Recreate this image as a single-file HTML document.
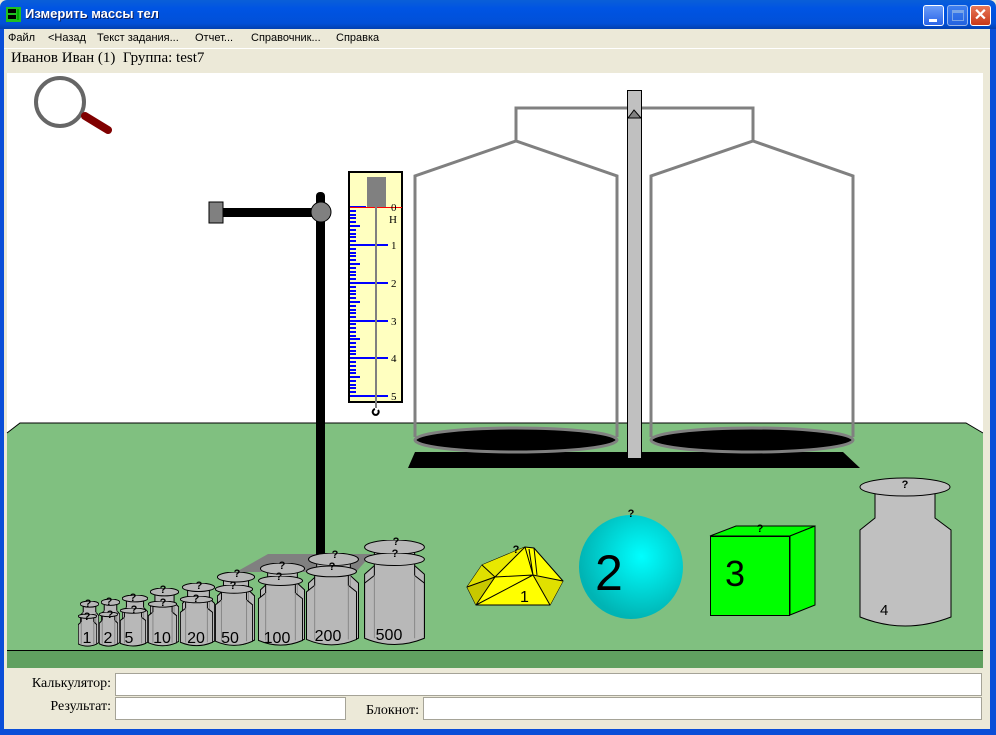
<!DOCTYPE html>
<html><head><meta charset="utf-8">
<style>
*{margin:0;padding:0;box-sizing:border-box}
body{width:996px;height:735px;overflow:hidden;background:#ece9d8;position:relative;font-family:"Liberation Sans",sans-serif}
.title{position:absolute;left:0;top:0;width:996px;height:29px;background:linear-gradient(#0a5fd8,#0054e3 30%,#0150d8 80%,#0340b0);border-radius:7px 7px 0 0}
.title span{position:absolute;left:25px;top:6px;color:#fff;font-weight:bold;font-size:13px;text-shadow:1px 1px #0a1e60}
.bl{position:absolute;top:29px;bottom:0;width:4px;background:#0a4ed8}
.menu{position:absolute;left:4px;top:29px;width:986px;height:19px;font-size:11px;color:#000}
.menu span{position:absolute;top:3px}
.user{position:absolute;left:11px;top:50px;font-family:"Liberation Serif",serif;font-size:15px}
.lbl{position:absolute;font-family:"Liberation Serif",serif;font-size:14px}
.inp{position:absolute;background:#fff;border:1px solid #a5a397;border-top-color:#a5a397}
.btn{position:absolute;top:5px;width:21px;height:21px;border:1px solid #fff;border-radius:3px}
</style></head><body>
<div class="title">
<svg style="position:absolute;left:6px;top:7px" width="15" height="15"><rect width="15" height="15" fill="#20c020"/><rect x="2" y="2" width="8" height="4" fill="#000"/><rect x="2" y="8" width="8" height="4" fill="#000"/><rect x="11" y="2" width="2" height="11" fill="#0a0"/></svg>
<span>Измерить массы тел</span>
<div class="btn" style="left:923px;background:linear-gradient(#6a9cf8,#2a64e8)"><div style="position:absolute;left:5px;top:13px;width:8px;height:3px;background:#fff"></div></div>
<div class="btn" style="left:947px;background:linear-gradient(#6a9cf8,#3a70e8);opacity:.6"><div style="position:absolute;left:4px;top:4px;width:12px;height:11px;border:1px solid #cde;border-top-width:3px"></div></div>
<div class="btn" style="left:970px;background:linear-gradient(#e87858,#c83818);color:#fff;font-weight:bold;font-size:16px;text-align:center;line-height:19px">✕</div>
</div>
<div class="bl" style="left:0"></div><div class="bl" style="left:990px;width:6px"></div>
<div style="position:absolute;left:0;top:729px;width:996px;height:6px;background:#0a4ed8"></div>
<div class="menu"><span style="left:4px">Файл</span><span style="left:44px">&lt;Назад</span><span style="left:93px">Текст задания...</span><span style="left:191px">Отчет...</span><span style="left:247px">Справочник...</span><span style="left:332px">Справка</span></div>
<div style="position:absolute;left:4px;top:48px;width:986px;height:1px;background:#fff"></div>
<div class="user">Иванов Иван (1)&nbsp; Группа: test7</div>

<svg style="position:absolute;left:0;top:0" width="996" height="735">
<defs>
<symbol id="w" viewBox="0 0 100 150" preserveAspectRatio="none">
<path d="M17,10 L17,36 L1,48 L1,136 Q50,156 99,136 L99,48 L83,36 L83,10 Z" fill="#b8b8b8" stroke="#000" stroke-width="1" vector-effect="non-scaling-stroke"/>
<path d="M17,36 L17,136 M83,36 L83,136" fill="none" stroke="#888" vector-effect="non-scaling-stroke"/>
<ellipse cx="50" cy="10" rx="49" ry="10" fill="#b8b8b8" stroke="#000" vector-effect="non-scaling-stroke"/>
</symbol>
<radialGradient id="sg" cx="0.6" cy="0.4" r="0.6"><stop offset="0" stop-color="#00ffff"/><stop offset="1" stop-color="#00b4b4"/></radialGradient>
</defs>
<rect x="7" y="73" width="976" height="595" fill="#fff"/>
<polygon points="7,433 20,423 966,423 983,433 983,668 7,668" fill="#80c080"/>
<path d="M7,433 L20,423 L966,423 L983,433" fill="none" stroke="#000"/>
<rect x="7" y="650" width="976" height="18" fill="#60a060"/>
<line x1="7" y1="650.5" x2="983" y2="650.5" stroke="#000"/>
<rect x="983" y="73" width="7" height="656" fill="#ece9d8"/>

<circle cx="60" cy="102" r="24" fill="none" stroke="#666" stroke-width="4"/>
<line x1="85" y1="116" x2="108" y2="130" stroke="#800000" stroke-width="8" stroke-linecap="round"/>

<polygon points="236,572 268,554 372,554 356,572" fill="#808080"/>
<rect x="316" y="192" width="9" height="373" rx="4" fill="#000"/>
<rect x="222" y="208" width="98" height="9" fill="#000"/>
<rect x="209" y="202" width="14" height="21" fill="#808080" stroke="#000"/>
<circle cx="321" cy="212" r="10" fill="#808080" stroke="#000"/>

<rect x="349" y="172" width="53" height="230" fill="#ffffc0" stroke="#000" stroke-width="2"/>
<g stroke="#0000ff" stroke-width="2">
<line x1="350" y1="245" x2="388" y2="245"/><line x1="350" y1="283" x2="388" y2="283"/><line x1="350" y1="321" x2="388" y2="321"/><line x1="350" y1="358" x2="388" y2="358"/><line x1="350" y1="396" x2="388" y2="396"/><line x1="350" y1="207" x2="366" y2="207"/>
<path d="M350,211h6M350,215h6M350,218h6M350,222h6M350,226h10M350,230h6M350,234h6M350,237h6M350,241h6M350,249h6M350,253h6M350,256h6M350,260h6M350,264h10M350,268h6M350,272h6M350,275h6M350,279h6M350,287h6M350,291h6M350,294h6M350,298h6M350,302h10M350,306h6M350,310h6M350,313h6M350,317h6M350,324h6M350,328h6M350,332h6M350,336h6M350,339h10M350,343h6M350,347h6M350,351h6M350,354h6M350,362h6M350,366h6M350,370h6M350,373h6M350,377h10M350,381h6M350,385h6M350,388h6M350,392h6"/>
</g>
<rect x="367" y="177" width="19" height="30" fill="#808080"/>
<line x1="350" y1="207.5" x2="402" y2="207.5" stroke="#f00"/>
<line x1="376" y1="207" x2="376" y2="408" stroke="#808080" stroke-width="2"/>
<path d="M378,410 a3,3 0 1 1 -3,-1" fill="none" stroke="#000" stroke-width="2"/>
<g font-family="Liberation Serif,serif" font-size="11" fill="#000">
<text x="391" y="211">0</text><text x="389" y="223">Н</text><text x="391" y="249">1</text><text x="391" y="287">2</text><text x="391" y="325">3</text><text x="391" y="362">4</text><text x="391" y="400">5</text></g>

<polygon points="415,452 843,452 860,468 408,468" fill="#000"/>
<g fill="none" stroke="#808080" stroke-width="3">
<path d="M516,141 V108 H753 V141"/>
<path d="M415,437 V176 L516,141 L617,176 V437"/>
<path d="M651,437 V176 L753,141 L853,176 V437"/>
</g>
<ellipse cx="516" cy="440" rx="101" ry="12" fill="#000" stroke="#808080" stroke-width="3"/>
<ellipse cx="752" cy="440" rx="101" ry="12" fill="#000" stroke="#808080" stroke-width="3"/>
<rect x="627.5" y="90.5" width="14" height="368" fill="#c0c0c0" stroke="#000"/>
<polygon points="634,110 628,118 641,118" fill="#808080" stroke="#000"/>

<g>
<use href="#w" x="80" y="601" width="19" height="46"/><use href="#w" x="78" y="614" width="19" height="33"/>
<use href="#w" x="101" y="599" width="19" height="48"/><use href="#w" x="99" y="612" width="19" height="35"/>
<use href="#w" x="122" y="595" width="26" height="52"/><use href="#w" x="120" y="608" width="26" height="39"/>
<use href="#w" x="150" y="588" width="29" height="59"/><use href="#w" x="148" y="601" width="29" height="46"/>
<use href="#w" x="182" y="583" width="33" height="64"/><use href="#w" x="180" y="596" width="33" height="51"/>
<use href="#w" x="217" y="572" width="38" height="75"/><use href="#w" x="215" y="585" width="38" height="62"/>
<use href="#w" x="260" y="563" width="45" height="84"/><use href="#w" x="258" y="576" width="45" height="71"/>
<use href="#w" x="308" y="553" width="51" height="94"/><use href="#w" x="306" y="566" width="51" height="81"/>
<use href="#w" x="364" y="540" width="61" height="107"/><use href="#w" x="364" y="553" width="61" height="94"/>
</g>
<g font-size="16" fill="#000" text-anchor="middle">
<text x="87" y="643">1</text><text x="108" y="643">2</text><text x="129" y="643">5</text><text x="162" y="643">10</text><text x="196" y="643">20</text><text x="230" y="643">50</text><text x="277" y="643">100</text><text x="328" y="641">200</text><text x="389" y="640">500</text></g>
<g font-size="11" font-weight="bold" fill="#000" text-anchor="middle">
<text x="88" y="607">?</text><text x="87" y="620">?</text><text x="109" y="605">?</text><text x="110" y="618">?</text><text x="133" y="601">?</text><text x="134" y="613">?</text><text x="163" y="593">?</text><text x="163" y="606">?</text><text x="199" y="589">?</text><text x="196" y="602">?</text><text x="237" y="577">?</text><text x="233" y="589">?</text><text x="282" y="569">?</text><text x="279" y="580">?</text><text x="335" y="558">?</text><text x="332" y="570">?</text><text x="396" y="545">?</text><text x="395" y="557">?</text></g>

<polygon points="467,587 482,565 525,547 534,548 563,581 550,605 476,605" fill="#ffff00" stroke="#000"/>
<polygon points="467,587 482,565 495,577" fill="#e0e000"/>
<polygon points="467,587 495,577 476,605" fill="#c8c800"/>
<polygon points="533,575 563,581 550,605" fill="#e0e000"/>
<polygon points="482,565 525,547 495,577" fill="#e8e800"/>
<g stroke="#000" fill="none"><path d="M482,565 L495,577 L467,587 M495,577 L476,605 M495,577 L533,575 L476,605 M533,575 L550,605 M533,575 L563,581 M525,547 L495,577 M525,547 L533,575 M534,548 L537,575 M529,549 L533,575"/></g>
<text x="520" y="602" font-size="16">1</text>
<text x="516" y="553" font-size="11" font-weight="bold" text-anchor="middle">?</text>

<circle cx="631" cy="567" r="52" fill="url(#sg)"/>
<text x="595" y="590" font-size="50">2</text>
<text x="631" y="517" font-size="11" font-weight="bold" text-anchor="middle">?</text>

<polygon points="710,536 736,526 815,526 790,536" fill="#00ff00" stroke="#000"/>
<polygon points="790,536 815,526 815,605 790,615" fill="#00ff00" stroke="#000"/>
<rect x="710.5" y="536.5" width="79" height="79" fill="#00ff00" stroke="#000"/>
<text x="725" y="586" font-size="36">3</text>
<text x="760" y="532" font-size="11" font-weight="bold" text-anchor="middle">?</text>

<path d="M875,485 V518 L860,530 V617 Q905,635 951,617 V530 L935,518 V485 Z" fill="#c0c0c0" stroke="#000"/>
<ellipse cx="905" cy="487" rx="45" ry="9" fill="#c0c0c0" stroke="#000"/>
<text x="880" y="615" font-size="15">4</text>
<text x="905" y="488" font-size="11" font-weight="bold" text-anchor="middle">?</text>
</svg>

<div class="lbl" style="right:885px;top:676px">Калькулятор:</div>
<div class="inp" style="left:115px;top:673px;width:867px;height:23px"></div>
<div class="lbl" style="right:885px;top:699px">Результат:</div>
<div class="inp" style="left:115px;top:697px;width:231px;height:23px"></div>
<div class="lbl" style="right:577px;top:703px">Блокнот:</div>
<div class="inp" style="left:423px;top:697px;width:559px;height:23px"></div>
</body></html>
